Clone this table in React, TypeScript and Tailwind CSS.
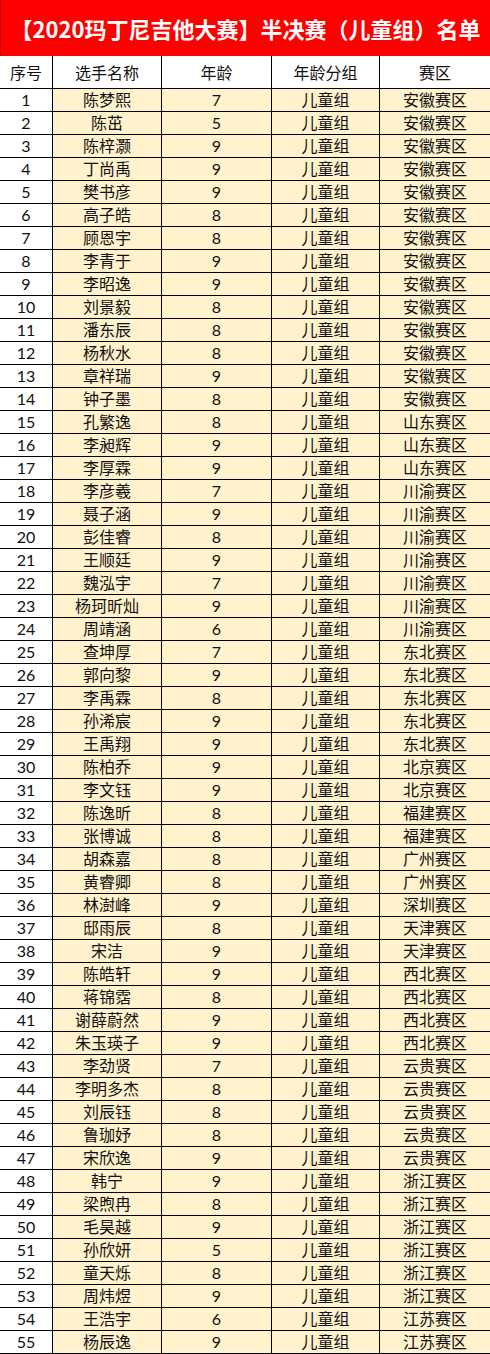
import React from "react";

const raw = `陈梦熙,7,安徽
陈茁,5,安徽
陈梓灏,9,安徽
丁尚禹,9,安徽
樊书彦,9,安徽
高子皓,8,安徽
顾恩宇,8,安徽
李青于,9,安徽
李昭逸,9,安徽
刘景毅,8,安徽
潘东辰,8,安徽
杨秋水,8,安徽
章祥瑞,9,安徽
钟子墨,8,安徽
孔繁逸,8,山东
李昶辉,9,山东
李厚霖,9,山东
李彦羲,7,川渝
聂子涵,9,川渝
彭佳睿,8,川渝
王顺廷,9,川渝
魏泓宇,7,川渝
杨珂昕灿,9,川渝
周靖涵,6,川渝
查坤厚,7,东北
郭向黎,9,东北
李禹霖,8,东北
孙浠宸,9,东北
王禹翔,9,东北
陈柏乔,9,北京
李文钰,9,北京
陈逸昕,8,福建
张博诚,8,福建
胡森嘉,8,广州
黄睿卿,8,广州
林澍峰,9,深圳
邸雨辰,8,天津
宋洁,9,天津
陈皓轩,9,西北
蒋锦霑,8,西北
谢薛蔚然,9,西北
朱玉瑛子,9,西北
李劲贤,7,云贵
李明多杰,8,云贵
刘辰钰,8,云贵
鲁珈妤,8,云贵
宋欣逸,9,云贵
韩宁,9,浙江
梁煦冉,8,浙江
毛昊越,9,浙江
孙欣妍,5,浙江
童天烁,8,浙江
周炜煜,9,浙江
王浩宇,6,江苏
杨辰逸,9,江苏`;

const rows = raw.split("\n").map((l, i) => {
  const [name, age, region] = l.split(",");
  return { id: i + 1, name, age, region: region + "赛区" };
});

const font = { fontFamily: "Lato, 'Noto Sans CJK SC', sans-serif" };

export default function App() {
  return (
    <div className="w-[490px] bg-white text-[#111]" style={font}>
      <div
        className="h-[56px] bg-[#ff0000] flex items-center justify-center text-white font-bold text-[22px] leading-none border-l border-[#c00000]"
        style={{ fontFamily: "'Noto Sans CJK SC', sans-serif" }}
      >
        【2020玛丁尼吉他大赛】半决赛（儿童组）名单
      </div>
      <div className="grid grid-cols-[53px_109px_110px_108px_110px] h-[33px] border-b border-black text-[16px] leading-none">
        {["序号", "选手名称", "年龄", "年龄分组", "赛区"].map((h, i) => (
          <div
            key={h}
            className={`flex items-center justify-center bg-white ${i < 4 ? "border-r border-black" : ""}`}
            style={{ fontFamily: "'Noto Sans CJK SC', sans-serif" }}
          >
            {h}
          </div>
        ))}
      </div>
      {rows.map((r) => (
        <div
          key={r.id}
          className="grid grid-cols-[53px_109px_110px_108px_110px] h-[23px] border-b border-black text-[16px] leading-none"
        >
          <div className="flex items-center justify-center bg-white border-r border-black">{r.id}</div>
          <div className="flex items-center justify-center bg-[#fff2cc] border-r border-black">{r.name}</div>
          <div className="flex items-center justify-center bg-[#fff2cc] border-r border-black">{r.age}</div>
          <div className="flex items-center justify-center bg-[#fff2cc] border-r border-black">儿童组</div>
          <div className="flex items-center justify-center bg-[#fff2cc]">{r.region}</div>
        </div>
      ))}
    </div>
  );
}
